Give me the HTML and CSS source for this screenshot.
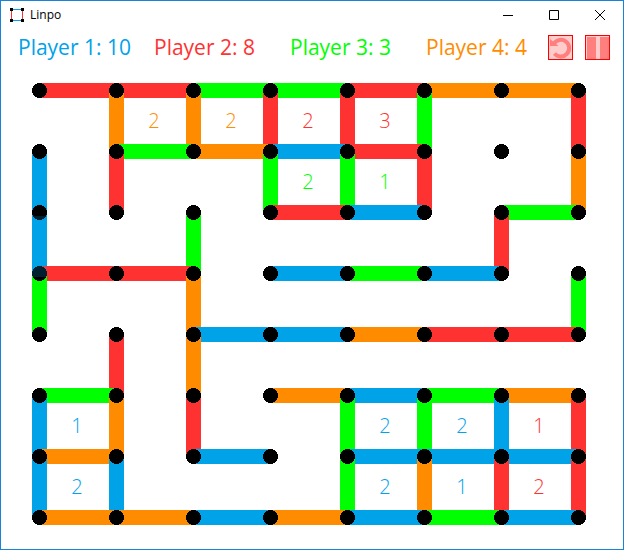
FILE: index.html
```html
<!DOCTYPE html>
<html lang="en">
<head>
<meta charset="utf-8">
<title>Linpo</title>
<link rel="stylesheet" href="styles.css">
</head>
<body>
<div class="window">
  <header class="titlebar">
    <svg class="app-icon" viewBox="0 0 14 14" width="14" height="14" aria-hidden="true">
      <path d="M1 1.5H13M1 12.5H13" stroke="#00a2e8"/>
      <path d="M1.5 1V13M12.5 1V13" stroke="#ff3232"/>
      <path d="M0 0h3v3H0zM11 0h3v3h-3zM0 11h3v3H0zM11 11h3v3h-3z" fill="#000"/>
    </svg>
    <h1 class="title">Linpo</h1>
    <div class="window-controls">
      <button class="window-button" type="button" aria-label="Minimize"><svg viewBox="0 0 10 10" width="10" height="10"><path d="M0 5.5H10"/></svg></button>
      <button class="window-button" type="button" aria-label="Maximize"><svg viewBox="0 0 10 10" width="10" height="10"><path d="M.5.5h9v9h-9z"/></svg></button>
      <button class="window-button" type="button" aria-label="Close"><svg viewBox="0 0 10 10" width="10" height="10"><path d="M0 0L10 10M10 0L0 10"/></svg></button>
    </div>
  </header>
  <div class="scorebar">
    <div class="scores">
      <span class="score blue">Player 1: 10</span>
      <span class="score red">Player 2: 8</span>
      <span class="score green">Player 3: 3</span>
      <span class="score orange">Player 4: 4</span>
    </div>
    <div class="actions">
      <button class="action" type="button" aria-label="Restart"><svg viewBox="0 0 23 23" width="23" height="23"><path d="M5 7.500A8.300 8.300 0 1 1 5.500 17.500" fill="none" stroke="#ff7f7f" stroke-width="4"/><path d="M1 3V10H9.500z" fill="#ff7f7f"/></svg></button>
      <button class="action" type="button" aria-label="Pause"><svg viewBox="0 0 23 23" width="23" height="23"><path d="M1 1h9v22H1zM14 1h9v22h-9z" fill="#ff7f7f"/></svg></button>
    </div>
  </div>
  <main class="field">
    <svg class="board" id="board" viewBox="-7.5 -7.5 554 442" role="img" aria-label="Game board"></svg>
  </main>
</div>
<script src="board.js"></script>
</body>
</html>
```
FILE: styles.css
```css
* {
  box-sizing: border-box;
}

body {
  margin: 0;
  background: #fff;
  font-family: "Open Sans", "Noto Sans", sans-serif;
}

.window {
  min-height: 100vh;
  border: 1px solid #1883d7;
  background: #fff;
}

.titlebar {
  display: flex;
  align-items: center;
  height: 28px;
  padding-left: 9px;
}

.app-icon {
  flex: none;
}

.app-icon path {
  shape-rendering: crispEdges;
}

.title {
  flex: 1;
  margin: 0 0 0 6px;
  font-size: 12px;
  line-height: 18px;
  font-weight: 400;
  color: #000;
}

.window-controls {
  display: flex;
}

.window-button {
  display: flex;
  align-items: center;
  justify-content: center;
  width: 46px;
  height: 28px;
  padding: 0;
  border: 0;
  background: none;
}

.window-button path {
  fill: none;
  stroke: #000;
}

.scorebar {
  display: flex;
  align-items: center;
  justify-content: space-between;
  height: 36px;
  padding: 0 13px 0 17px;
}

.scores {
  display: grid;
  grid-template-columns: repeat(3, 136px) auto;
}

.score {
  font-size: 21px;
  line-height: 28px;
  white-space: nowrap;
}

.actions {
  display: flex;
  flex: none;
  gap: 12px;
}

.action {
  width: 25px;
  height: 25px;
  padding: 0;
  border: 1px solid #f00;
  background: #ffcccc;
}

.action svg {
  display: block;
}

.field {
  padding: 18px 37px 24px 31px;
}

.board {
  display: block;
  width: 100%;
  height: auto;
}

.edge,
.dot {
  shape-rendering: crispEdges;
}

.edge {
  stroke: currentColor;
  stroke-width: 15;
}

.highlight {
  opacity: 0.2;
}

.points {
  fill: currentColor;
  font-size: 20px;
  font-weight: 300;
  text-anchor: middle;
}

.blue {
  color: #00a2e8;
}

.red {
  color: #ff3232;
}

.green {
  color: #00ff00;
}

.orange {
  color: #ff8c00;
}
```
FILE: board.js
```js
const NS = "http://www.w3.org/2000/svg";
const STEP_X = 77;
const STEP_Y = 61;
const COLORS = { B: "blue", R: "red", G: "green", O: "orange" };

// One string per row of dots; each letter is the owner of an edge.
const horizontal = [
  "RRGGROO", "-GOBR--", "---RB-G", "RR-BGB-",
  "--BBORR", "G--OBGO", "O-B-BBB", "OOBOBGB"
];
const vertical = [
  "-OORRG-R", "BR-GGR-O", "B-G---R-", "G-O----G",
  "-RO-----", "BOR-GGBR", "BB--GORR"
];
// Captured cells: column, row, points, owner.
const cells = [
  [1, 0, 2, "O"], [2, 0, 2, "O"], [3, 0, 2, "R"], [4, 0, 3, "R"],
  [3, 1, 2, "G"], [4, 1, 1, "G"],
  [0, 5, 1, "B"], [4, 5, 2, "B"], [5, 5, 2, "B"], [6, 5, 1, "R"],
  [0, 6, 2, "B"], [4, 6, 2, "B"], [5, 6, 1, "B"], [6, 6, 2, "R"]
];

const board = document.getElementById("board");

function add(name, attributes, text) {
  const node = document.createElementNS(NS, name);
  for (const key in attributes) node.setAttribute(key, attributes[key]);
  if (text !== undefined) node.textContent = text;
  board.appendChild(node);
}

function addEdge(owner, x, y, dx, dy) {
  if (owner === "-") return;
  add("line", {
    class: "edge " + COLORS[owner],
    x1: x * STEP_X, y1: y * STEP_Y,
    x2: (x + dx) * STEP_X, y2: (y + dy) * STEP_Y
  });
}

horizontal.forEach((row, y) => {
  [...row].forEach((owner, x) => addEdge(owner, x, y, 1, 0));
  [...(vertical[y] || "")].forEach((owner, x) => addEdge(owner, x, y, 0, 1));
});

for (let y = 0; y < 8; y++) {
  for (let x = 0; x < 8; x++) {
    add("circle", { class: "dot", cx: x * STEP_X, cy: y * STEP_Y, r: 7.5 });
  }
}

// The most recent move is laid over its two dots.
add("line", { class: "edge blue highlight", x1: 0, y1: 2 * STEP_Y + 3, x2: 0, y2: 3 * STEP_Y + 3 });

cells.forEach(([x, y, points, owner]) => {
  add("text", {
    class: "points " + COLORS[owner],
    x: x * STEP_X + 37.5, y: y * STEP_Y + 37
  }, points);
});
```
